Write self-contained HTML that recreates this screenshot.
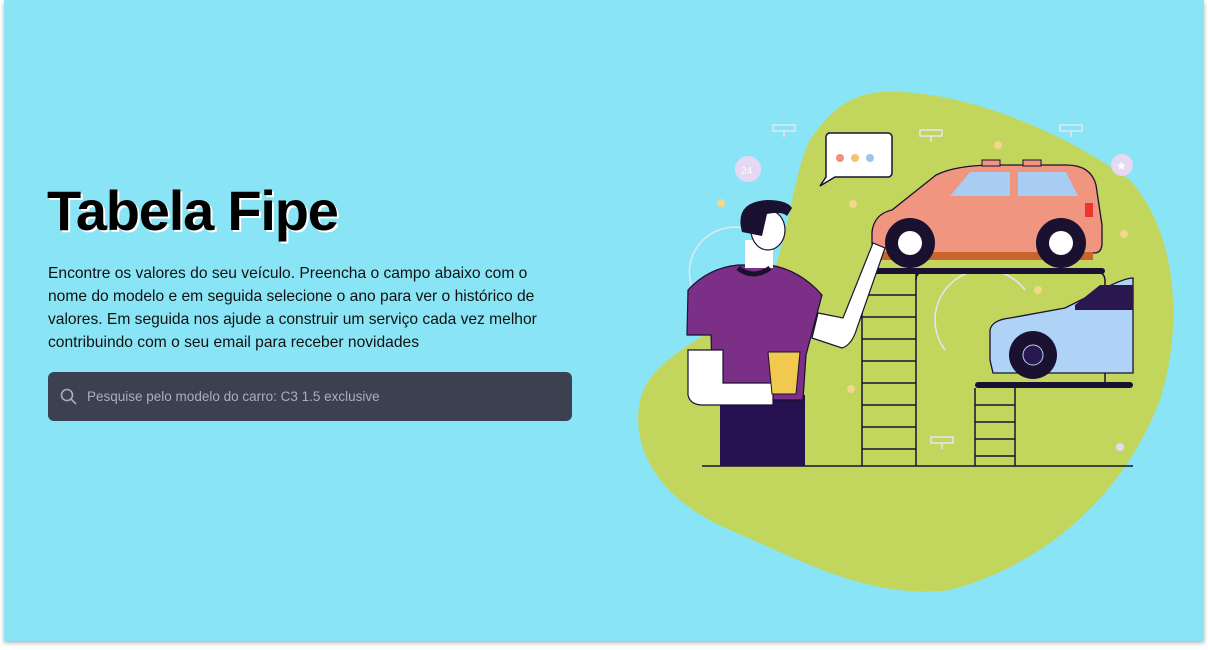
<!DOCTYPE html>
<html><head><meta charset="utf-8"><style>
html,body{margin:0;padding:0;width:1208px;height:650px;background:#fff;overflow:hidden;font-family:"Liberation Sans",sans-serif}
.card{position:absolute;left:4px;top:0;width:1200px;height:641px;background:#89e5f5;box-shadow:0 2px 4px rgba(0,0,0,.3)}
h1{position:absolute;left:47px;top:178px;margin:0;font-size:56px;font-weight:700;letter-spacing:-1.2px;color:#000;text-shadow:2px 2px 0 #fff}
p{position:absolute;left:48px;top:262px;width:560px;margin:0;font-size:15.6px;line-height:23px;color:#111;white-space:nowrap}
.s{position:absolute;left:48px;top:372px;width:524px;height:49px;background:#3b4150;border-radius:6px}
.s span{position:absolute;left:39px;top:17px;font-size:13.5px;color:#a9aeb8}
svg{position:absolute;left:0;top:0}
</style></head><body>
<div class="card"></div>
<h1>Tabela Fipe</h1>
<p>Encontre os valores do seu veículo. Preencha o campo abaixo com o<br>nome do modelo e em seguida selecione o ano para ver o histórico de<br>valores. Em seguida nos ajude a construir um serviço cada vez melhor<br>contribuindo com o seu email para receber novidades</p>
<div class="s"><svg width="20" height="20" style="left:11px;top:15px"><circle cx="8" cy="8" r="5.5" fill="none" stroke="#a9aeb8" stroke-width="1.6"/><path d="M12 12l5 5" stroke="#a9aeb8" stroke-width="1.6"/></svg><span>Pesquise pelo modelo do carro: C3 1.5 exclusive</span></div>
<svg width="1208" height="650" viewBox="0 0 1208 650">
<path d="M880 92C960 88 1060 130 1130 180C1175 230 1185 320 1160 400C1130 480 1060 560 950 590C870 600 800 560 730 530C660 500 630 450 640 400C650 360 700 340 760 300C790 250 790 180 810 140C830 110 850 95 880 92Z" fill="#c2d65e"/>
<g fill="none" stroke="#e4e6f5" stroke-width="1.5"><path d="M773 125h22v6h-22zM784 131v6M920 130h22v6h-22zM931 136v6M1060 125h22v6h-22zM1071 131v6M931 437h22v6h-22zM942 443v6"/><path d="M710 310a45 45 0 0 1 40-80M945 350a50 50 0 0 1 80-60"/></g>
<circle cx="748" cy="169" r="13" fill="#e4d8f5"/><text x="741" y="174" font-size="10" fill="#fff">24</text>
<circle cx="1122" cy="165" r="11" fill="#e4d8f5"/><text x="1116" y="170" font-size="12" fill="#fff">★</text>
<g fill="#f3d78a"><circle cx="721" cy="203" r="4"/><circle cx="853" cy="204" r="4"/><circle cx="998" cy="145" r="4"/><circle cx="1124" cy="234" r="4"/><circle cx="1038" cy="290" r="4"/><circle cx="851" cy="389" r="4"/></g><circle cx="1120" cy="447" r="4" fill="#e4d8f5"/>
<path d="M828 133h60a4 4 0 0 1 4 4v36a4 4 0 0 1-4 4h-53l-15 9 6-9v-40a4 4 0 0 1 4-4z" fill="#fff" stroke="#1a1030" stroke-width="1.5"/>
<circle cx="840" cy="158" r="4" fill="#ef907c"/><circle cx="855" cy="158" r="4" fill="#f3c46a"/><circle cx="870" cy="158" r="4" fill="#9fc3ee"/>
<g stroke="#1a1030" stroke-width="1.5" fill="none"><path d="M702 466h431"/><path d="M862 273v193M916 273v193M862 295h54M862 317h54M862 339h54M862 361h54M862 383h54M862 405h54M862 427h54M862 449h54"/><path d="M916 280q0-8 8-8h172q9 0 9 9v102"/><path d="M975 388v78M1015 388v78M975 405h40M975 422h40M975 439h40M975 456h40"/></g>
<rect x="862" y="268" width="243" height="6" rx="3" fill="#1a1030"/>
<rect x="975" y="382" width="158" height="6" rx="3" fill="#1a1030"/>
<path d="M872 232q2-18 20-22l44-35q20-10 60-10h70q25 0 30 20l6 40v18q0 10-8 10h-214q-8 0-8-10z" fill="#ef9580" stroke="#1a1030" stroke-width="1.3"/>
<path d="M873 252h220v8h-220z" fill="#c8642c"/>
<path d="M950 196l20-24h40v24zM1018 172h48l12 24h-60z" fill="#a8ccf2"/>
<rect x="982" y="160" width="18" height="6" fill="#ef9580" stroke="#1a1030"/><rect x="1023" y="160" width="18" height="6" fill="#ef9580" stroke="#1a1030"/>
<rect x="1085" y="203" width="8" height="14" fill="#e33"/>
<g><circle cx="910" cy="243" r="25" fill="#1a1030"/><circle cx="910" cy="243" r="12" fill="#fff"/><circle cx="1061" cy="243" r="25" fill="#1a1030"/><circle cx="1061" cy="243" r="12" fill="#fff"/></g>
<path d="M990 360v-30q2-10 20-12l55-10l40-20q20-10 28-10v95h-140z" fill="#afd3f6" stroke="#1a1030" stroke-width="1.3"/>
<path d="M1075 305l25-20h33v25h-58z" fill="#2a1750"/>
<circle cx="1033" cy="355" r="24" fill="#1a1030"/><circle cx="1033" cy="355" r="10" fill="#2a1750" stroke="#afd3f6"/>
<path d="M720 395h85v71h-85z" fill="#27104f"/>
<path d="M688 290q20-22 50-25h32q30 5 52 30l-16 60-3 45h-90l-2-65h-24z" fill="#7b2f86" stroke="#1a1030" stroke-width="1.2"/>
<path d="M688 350v45q2 10 15 10h70v-22h-50v-33z" fill="#fff" stroke="#1a1030" stroke-width="1.2"/>
<path d="M812 338l30 10q10-3 15-20l28-80-12-5-30 75-25-5z" fill="#fff" stroke="#1a1030" stroke-width="1.2"/>
<path d="M745 240v28h28v-28z" fill="#fff"/>
<ellipse cx="768" cy="230" rx="17" ry="20" fill="#fff" stroke="#1a1030" stroke-width="1.2"/>
<path d="M742 232q-8-30 25-32q20 0 25 8l-5 8q-5-5-20-2l-5 22z" fill="#1a1030"/>
<path d="M738 268q15 12 32 0" stroke="#1a1030" stroke-width="5" fill="none"/>
<path d="M768 352h32l-4 42h-24z" fill="#f1c94e" stroke="#1a1030" stroke-width="1"/>
</svg>
</body></html>
